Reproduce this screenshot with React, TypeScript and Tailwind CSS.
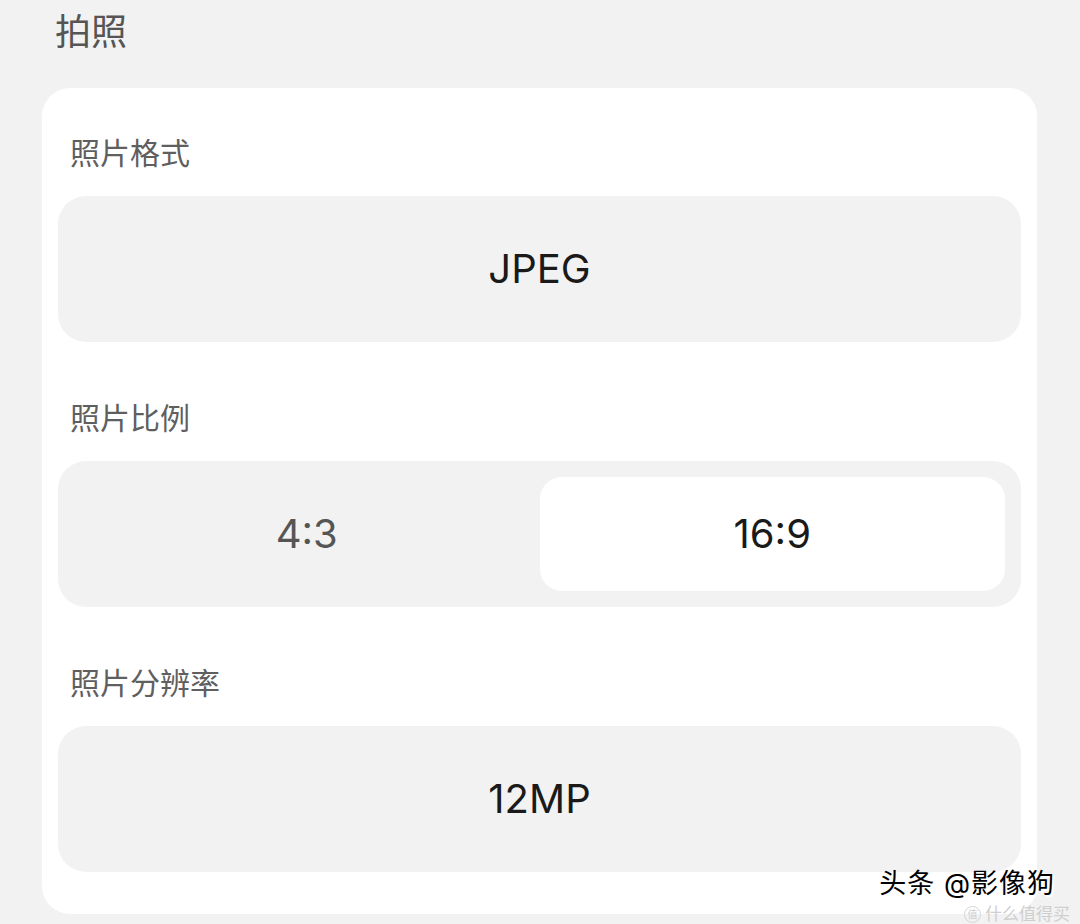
const font = "font-['Inter','Noto_Sans_CJK_SC',sans-serif]";

function Label({ children }: { children: React.ReactNode }) {
  return (
    <div className="pl-[12px] text-[30px] leading-[40px] text-[#5f5f5f]">{children}</div>
  );
}

function ValueBox({ value }: { value: string }) {
  return (
    <div className="mt-[23px] h-[146px] rounded-[28px] bg-[#f2f2f2] flex items-center justify-center text-[40px] text-[#1a1a1a]">
      {value}
    </div>
  );
}

export default function App() {
  return (
    <div className={`relative h-[924px] w-[1080px] overflow-hidden bg-[#f2f2f2] ${font}`}>
      <div className="pt-[10px] pl-[55px] text-[36px] leading-[44px] text-[#555555]">拍照</div>

      <div className="mt-[34px] ml-[42px] w-[995px] rounded-[28px] bg-white px-[16px] pt-[45px] pb-[42px]">
        <Label>照片格式</Label>
        <ValueBox value="JPEG" />

        <div className="mt-[56px]">
          <Label>照片比例</Label>
        </div>
        <div className="mt-[23px] h-[146px] rounded-[28px] bg-[#f2f2f2] p-[16px] flex">
          <div className="flex-1 flex items-center justify-center text-[40px] text-[#555555]">4:3</div>
          <div className="flex-1 flex items-center justify-center rounded-[22px] bg-white text-[40px] text-[#1a1a1a]">
            16:9
          </div>
        </div>

        <div className="mt-[56px]">
          <Label>照片分辨率</Label>
        </div>
        <ValueBox value="12MP" />
      </div>

      {/* watermark */}
      <div className="absolute right-[25px] bottom-[26px] text-[27px] leading-[28px] tracking-[1px] text-black [text-shadow:2px_2px_0_#fff]">
        头条 @影像狗
      </div>
      <div className="absolute right-[10px] bottom-[1px] flex items-center gap-[4px] text-[17px] leading-[18px] text-[#cfcfcf]">
        <span className="inline-flex h-[17px] w-[17px] items-center justify-center rounded-full border border-[#d5d5d5] text-[10px]">值</span>
        什么值得买
      </div>
    </div>
  );
}
